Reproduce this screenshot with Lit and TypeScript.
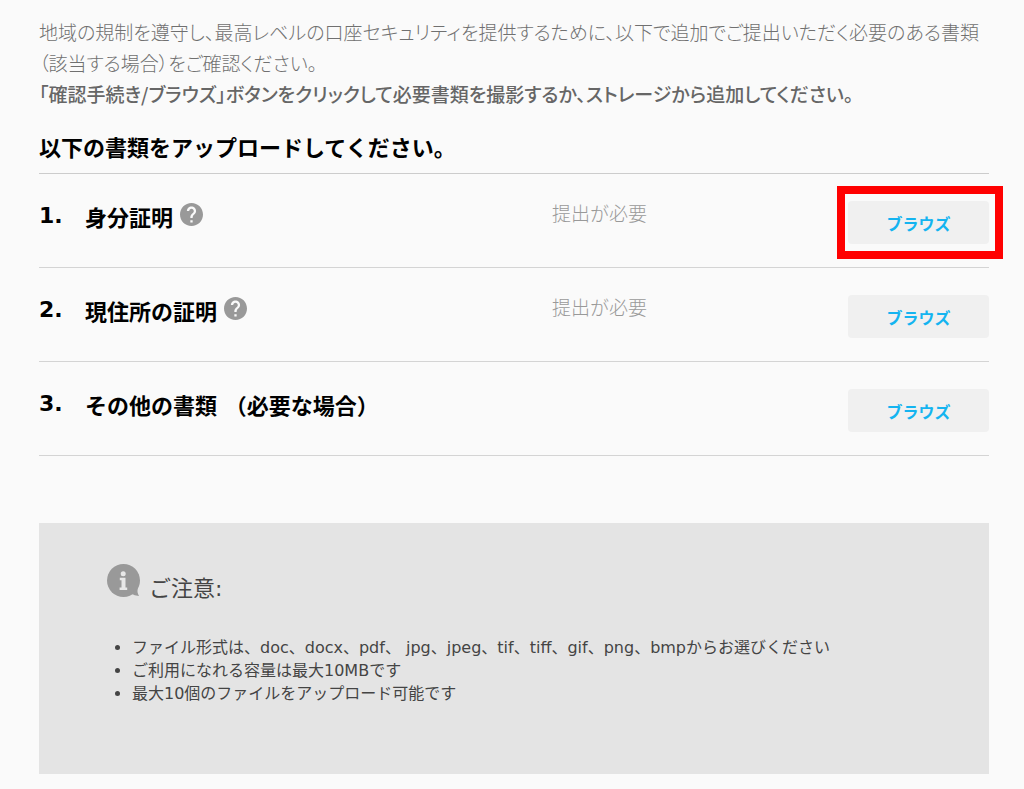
import { LitElement, html, css, svg, nothing } from "lit";
import { customElement } from "lit/decorators.js";

interface DocumentRow {
  title: string;
  status: string;
  help: boolean;
  highlighted: boolean;
}

const documents: DocumentRow[] = [
  { title: "身分証明", status: "提出が必要", help: true, highlighted: true },
  { title: "現住所の証明", status: "提出が必要", help: true, highlighted: false },
  { title: "その他の書類 （必要な場合）", status: "", help: false, highlighted: false },
];

const notes = [
  "ファイル形式は、doc、docx、pdf、 jpg、jpeg、tif、tiff、gif、png、bmpからお選びください",
  "ご利用になれる容量は最大10MBです",
  "最大10個のファイルをアップロード可能です",
];

const helpIcon = html`<svg class="help-icon" viewBox="2 2 20 20" aria-hidden="true">
  ${svg`<path d="M12 2C6.48 2 2 6.48 2 12s4.48 10 10 10 10-4.48 10-10S17.52 2 12 2zm1 17h-2v-2h2v2zm2.07-7.75l-.9.92C13.45 12.9 13 13.5 13 15h-2v-.5c0-1.1.45-2.1 1.17-2.83l1.24-1.26c.37-.36.59-.86.59-1.41 0-1.1-.9-2-2-2s-2 .9-2 2H8c0-2.21 1.79-4 4-4s4 1.79 4 4c0 .88-.36 1.68-.93 2.25z"/>`}
</svg>`;

const infoIcon = html`<svg class="info-icon" viewBox="0 0 33 33" aria-hidden="true">
  <circle class="info-shape" cx="16.5" cy="16.5" r="16.5"/>
  <path class="info-shape" d="M31 23Q29.500 27.500 32 32Q27.500 31.500 24 29.500Z"/>
  <circle class="info-mark" cx="16.200" cy="9.700" r="2.500"/>
  <path class="info-mark" d="M12.800 13.700h5.700v9.800h1.700v2.500h-7.600v-2.500h1.900v-7.300h-1.700z"/>
</svg>`;

@customElement("app-root")
export class AppRoot extends LitElement {
  static styles = css`
    :host {
      display: block;
      box-sizing: border-box;
      min-height: 100vh;
      padding: 16px 35px 16px 39px;
      background: #fafafa;
      color: #000;
      font-family: "DejaVu Sans", "Noto Sans CJK JP", sans-serif;
    }
    p, h1, h2, h3, ol, ul {
      margin: 0;
      padding: 0;
    }
    .intro {
      color: #707070;
      font-family: "Noto Sans CJK JP", sans-serif;
      font-size: 19px;
      font-weight: 300;
      line-height: 31px;
      font-feature-settings: "palt";
    }
    .intro strong {
      color: #666;
      font-weight: 500;
    }
    .title {
      margin-top: 23px;
      padding-bottom: 7px;
      border-bottom: 1px solid #ccc;
      font-size: 22px;
      line-height: 34px;
    }
    .documents {
      list-style: none;
    }
    .row {
      display: grid;
      grid-template-columns: 46px 1fr 296px 141px;
      align-items: start;
      box-sizing: border-box;
      min-height: 94px;
      padding-top: 27px;
      border-bottom: 1px solid #d4d4d4;
    }
    .number, .name {
      font-size: 22px;
      font-weight: 700;
      line-height: 30px;
    }
    .name {
      display: flex;
      gap: 7px;
      line-height: 36px;
    }
    .help {
      display: block;
      width: 23px;
      height: 23px;
      margin-top: 2px;
      padding: 0;
      border: 0;
      background: none;
      cursor: pointer;
    }
    .help-icon {
      display: block;
      width: 23px;
      height: 23px;
      fill: #999;
    }
    .status {
      color: #999;
      font-family: "Noto Sans CJK JP", sans-serif;
      font-size: 19px;
      font-weight: 300;
      line-height: 24px;
    }
    .action {
      position: relative;
    }
    .browse {
      display: block;
      width: 100%;
      height: 43px;
      padding: 0;
      border: 0;
      border-radius: 4px;
      background: #f0f0f0;
      color: #14b4f0;
      font: inherit;
      font-size: 16px;
      font-weight: 700;
      cursor: pointer;
    }
    .marker {
      position: absolute;
      inset: -15px -14px -15px -11px;
      border: 8px solid #f00;
      pointer-events: none;
    }
    .notice {
      box-sizing: border-box;
      min-height: 251px;
      margin-top: 67px;
      padding: 41px 68px;
      background: #e4e4e4;
      color: #444;
    }
    .notice-title {
      display: flex;
      gap: 9px;
      font-size: 22px;
      font-weight: 400;
      line-height: 50px;
    }
    .info-icon {
      width: 33px;
      height: 33px;
    }
    .info-shape {
      fill: #999;
    }
    .info-mark {
      fill: #e8e8e8;
    }
    .notes {
      margin-top: 22px;
      padding-left: 25px;
      font-size: 16px;
      line-height: 23px;
    }
  `;

  private renderRow(row: DocumentRow, index: number) {
    return html`<li class="row">
      <span class="number">${index + 1}.</span>
      <h3 class="name">
        <span>${row.title}</span>
        ${row.help
          ? html`<button class="help" type="button" aria-label="${row.title}">${helpIcon}</button>`
          : nothing}
      </h3>
      <span class="status">${row.status}</span>
      <div class="action">
        <button class="browse" type="button">ブラウズ</button>
        ${row.highlighted ? html`<div class="marker"></div>` : nothing}
      </div>
    </li>`;
  }

  render() {
    return html`
      <main lang="ja">
        <p class="intro">
          地域の規制を遵守し、最高レベルの口座セキュリティを提供するために、以下で追加でご提出いただく必要のある書類（該当する場合）をご確認ください。<br />
          <strong>「確認手続き/ブラウズ」ボタンをクリックして必要書類を撮影するか、ストレージから追加してください。</strong>
        </p>
        <h1 class="title">以下の書類をアップロードしてください。</h1>
        <ol class="documents">
          ${documents.map((row, index) => this.renderRow(row, index))}
        </ol>
        <section class="notice">
          <h2 class="notice-title">${infoIcon}<span>ご注意:</span></h2>
          <ul class="notes">
            ${notes.map((note) => html`<li>${note}</li>`)}
          </ul>
        </section>
      </main>
    `;
  }
}
